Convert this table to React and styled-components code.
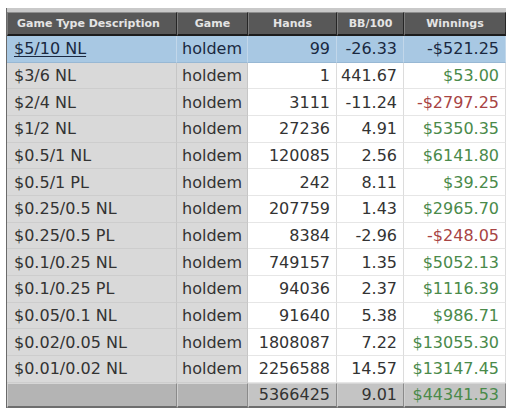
import React from "react";
import styled, { createGlobalStyle, css } from "styled-components";

const Global = createGlobalStyle`
  html, body { margin: 0; padding: 0; background: #ffffff; }
  body { font-family: "DejaVu Sans", Verdana, sans-serif; }
`;

const COLS = "170px 71px 89px 67px 102px";

const Page = styled.div`
  padding: 8px 0 0 7px;
`;

const Frame = styled.div`
  width: 499px;
  border-top: 4px solid #c9c9c9;
  box-shadow: -1px 0 0 #6a6a6a;
`;

const Row = styled.div`
  display: grid;
  grid-template-columns: ${COLS};
  height: ${(p) => p.$h};
`;

const HeadCell = styled.div`
  display: flex;
  align-items: center;
  justify-content: ${(p) => (p.$left ? "flex-start" : "center")};
  padding: ${(p) => (p.$left ? "0 0 0 9px" : "0")};
  background: #585858;
  color: #e4e4e4;
  font: bold 11px "DejaVu Sans", Verdana, sans-serif;
  border-top: 1px solid #8e8e8e;
  border-left: 1px solid #7c7c7c;
  border-right: 1px solid #262626;
  border-bottom: 2px solid #1c1c1c;
  box-sizing: border-box;
  white-space: nowrap;
`;

const shades = {
  gray: { bg: "#d9d9d9", line: "#c6c6c6", hline: "#cdcdcd" },
  white: { bg: "#ffffff", line: "#dcdcdc", hline: "#e6e6e6" },
};

const Cell = styled.div`
  display: flex;
  align-items: center;
  justify-content: ${(p) => (p.$right ? "flex-end" : "flex-start")};
  padding: ${(p) => (p.$right ? "0 6px 0 0" : p.$pad || "0 0 0 7px")};
  box-sizing: border-box;
  font-size: 16px;
  font-family: "DejaVu Sans", Verdana, sans-serif;
  white-space: nowrap;
  color: ${(p) =>
    p.$sel ? "#1a2840" : p.$tone === "pos" ? "#4a8a4a" : p.$tone === "neg" ? "#a84444" : "#333333"};
  background: ${(p) => (p.$sel ? "#a8c8e3" : shades[p.$shade].bg)};
  border-right: 1px solid ${(p) => (p.$sel ? "#c2d7ea" : shades[p.$shade].line)};
  border-bottom: 1px solid ${(p) => (p.$sel ? "#98b8d4" : shades[p.$shade].hline)};
  ${(p) =>
    p.$link &&
    css`
      text-decoration: underline;
      text-underline-offset: 2px;
    `}
`;

const TotalCell = styled.div`
  display: flex;
  align-items: center;
  justify-content: flex-end;
  padding: 0 6px 0 0;
  box-sizing: border-box;
  font-size: 16px;
  font-family: "DejaVu Sans", Verdana, sans-serif;
  color: ${(p) => (p.$tone === "pos" ? "#4a8a4a" : "#333333")};
  background: ${(p) => (p.$dark ? "#b4b4b4" : "#c4c4c4")};
  border-top: 1px solid #d6d6d6;
  border-left: 1px solid #d0d0d0;
  border-right: 1px solid #8a8a8a;
  border-bottom: 2px solid #6e6e6e;
`;

const rows = [
  ["$5/10 NL", "99", "-26.33", "-$521.25", "neg"],
  ["$3/6 NL", "1", "441.67", "$53.00", "pos"],
  ["$2/4 NL", "3111", "-11.24", "-$2797.25", "neg"],
  ["$1/2 NL", "27236", "4.91", "$5350.35", "pos"],
  ["$0.5/1 NL", "120085", "2.56", "$6141.80", "pos"],
  ["$0.5/1 PL", "242", "8.11", "$39.25", "pos"],
  ["$0.25/0.5 NL", "207759", "1.43", "$2965.70", "pos"],
  ["$0.25/0.5 PL", "8384", "-2.96", "-$248.05", "neg"],
  ["$0.1/0.25 NL", "749157", "1.35", "$5052.13", "pos"],
  ["$0.1/0.25 PL", "94036", "2.37", "$1116.39", "pos"],
  ["$0.05/0.1 NL", "91640", "5.38", "$986.71", "pos"],
  ["$0.02/0.05 NL", "1808087", "7.22", "$13055.30", "pos"],
  ["$0.01/0.02 NL", "2256588", "14.57", "$13147.45", "pos"],
];

export default function App() {
  return (
    <>
      <Global />
      <Page>
        <Frame>
          <Row $h="24px">
            <HeadCell $left>Game Type Description</HeadCell>
            <HeadCell>Game</HeadCell>
            <HeadCell>Hands</HeadCell>
            <HeadCell>BB/100</HeadCell>
            <HeadCell>Winnings</HeadCell>
          </Row>
          {rows.map(([desc, hands, bb, win, tone], i) => {
            const sel = i === 0;
            return (
              <Row $h="26.67px" key={desc}>
                <Cell $shade="gray" $sel={sel} $link={sel}>{desc}</Cell>
                <Cell $shade="gray" $sel={sel} $pad="0 0 0 5px">holdem</Cell>
                <Cell $shade="white" $sel={sel} $right>{hands}</Cell>
                <Cell $shade="white" $sel={sel} $right>{bb}</Cell>
                <Cell $shade="white" $sel={sel} $right $tone={tone}>{win}</Cell>
              </Row>
            );
          })}
          <Row $h="25.3px">
            <TotalCell $dark />
            <TotalCell $dark />
            <TotalCell>5366425</TotalCell>
            <TotalCell>9.01</TotalCell>
            <TotalCell $tone="pos">$44341.53</TotalCell>
          </Row>
        </Frame>
      </Page>
    </>
  );
}
